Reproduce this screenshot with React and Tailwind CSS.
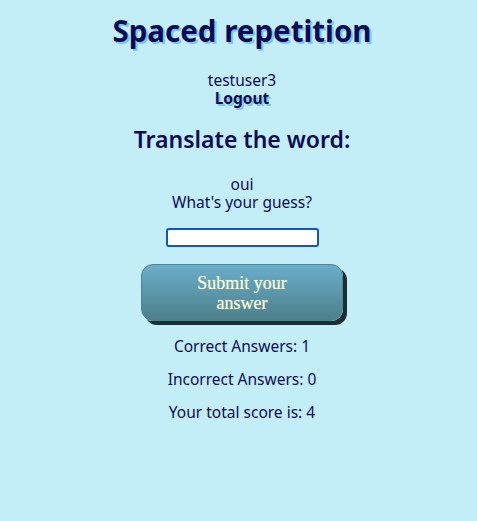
export default function App() {
  return (
    <div className="min-h-[521px] bg-[#c3edf7] text-[#0c0c55] font-['Noto_Sans',sans-serif] flex flex-col items-center text-center pl-[7px]">
      <h1 className="mt-[10px] text-[29.5px] leading-[42px] font-bold [text-shadow:2px_2px_0_#7ec7e6]">
        Spaced repetition
      </h1>
      <div className="mt-[19px] text-[15.5px] leading-[18px]">testuser3</div>
      <button className="text-[15.5px] leading-[18px] font-bold [text-shadow:2px_2px_0_#7ec7e6]">
        Logout
      </button>
      <h2 className="mt-[17px] text-[23px] leading-[30px] font-semibold">Translate the word:</h2>
      <div className="mt-[21px] text-[15.5px] leading-[18px]">
        <div>oui</div>
        <div>What's your guess?</div>
      </div>
      <input
        type="text"
        className="mt-[17px] w-[153px] h-[19px] bg-white border-2 border-[#1553c4] rounded-[3px] outline-none"
      />
      <button className="mt-[17px] w-[202px] h-[57px] rounded-[12px] border border-[#4d8591] bg-gradient-to-b from-[#6badca] to-[#4c808c] shadow-[4px_4px_0_#1b2e36] text-[#f4f8e8] font-['Liberation_Serif',serif] text-[18px] leading-[20px] [text-shadow:0_0_1px_#c9e08a] flex items-center justify-center">
        <span className="block max-w-[110px]">Submit your answer</span>
      </button>
      <div className="mt-[16px] flex flex-col gap-[15px] text-[15.5px] leading-[18px]">
        <div>Correct Answers: 1</div>
        <div>Incorrect Answers: 0</div>
        <div>Your total score is: 4</div>
      </div>
    </div>
  );
}
